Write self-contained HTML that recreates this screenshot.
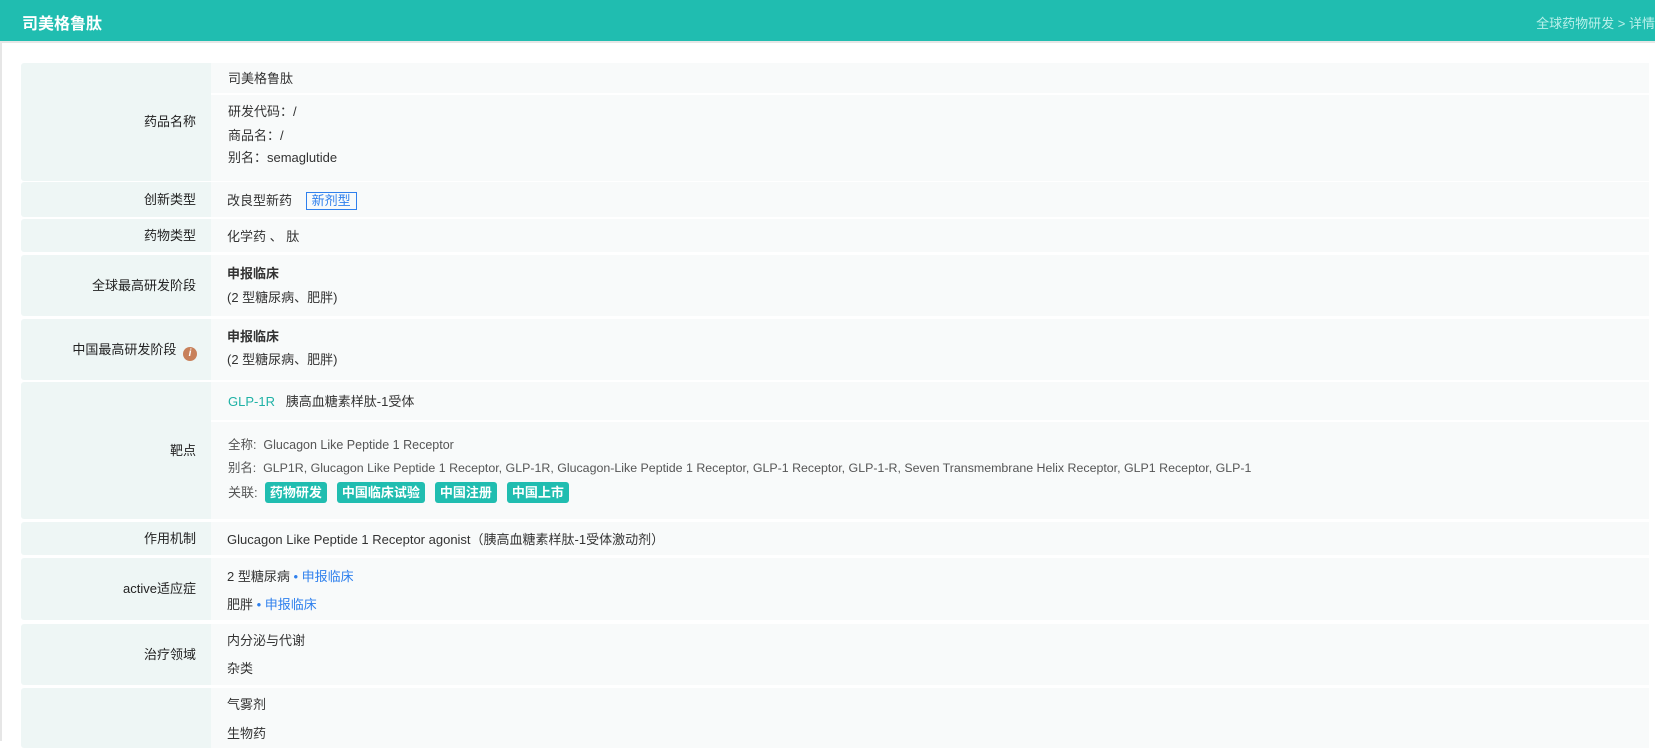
<!DOCTYPE html>
<html><head><meta charset="utf-8"><style>
*{margin:0;padding:0;box-sizing:border-box}
body{width:1655px;height:741px;overflow:hidden;background:#fff;font-family:"Liberation Sans","Noto Sans CJK SC",sans-serif;font-size:13px;color:#333;position:relative}
.hd{position:absolute;left:0;top:0;width:1655px;height:41px;background:#20bdb0}
.hd .t{position:absolute;left:22px;top:10px;color:#fff;font-size:16px;font-weight:bold}
.hd .r{position:absolute;right:0;top:13px;color:#b9f0ea;font-size:13px}
.bl{position:absolute;left:0;top:41px;width:2px;height:700px;background:#e6e6e6}
.bt{position:absolute;left:0;top:41px;width:1655px;height:2px;background:#e6e6e6}
.l{position:absolute;left:21px;width:190px;background:#eef6f5;border-radius:3px 0 0 3px;text-align:right;padding-right:15px;color:#222}
.c{position:absolute;left:211px;width:1438px;background:#f8fafa}
.tx{position:absolute;white-space:nowrap;line-height:16px}
.tag{display:inline-block;background:#20bdb0;color:#fff;font-weight:bold;border-radius:3px;padding:2px 5px;margin-right:10px;line-height:17px}
.b{color:#2f80ed}
</style></head><body>
<div class="hd"><div class="t">司美格鲁肽</div><div class="r">全球药物研发 &gt; 详情</div></div>
<div class="bt"></div><div class="bl"></div>

<div class="l" style="top:63px;height:118px;line-height:118px">药品名称</div>
<div class="c" style="top:63px;height:30px"></div>
<div class="c" style="top:95px;height:86px"></div>
<div class="tx" style="left:228px;top:71px">司美格鲁肽</div>
<div class="tx" style="left:228px;top:104px">研发代码：/</div>
<div class="tx" style="left:228px;top:128px">商品名：/</div>
<div class="tx" style="left:228px;top:150px">别名：semaglutide</div>

<div class="l" style="top:182px;height:35px;line-height:35px">创新类型</div>
<div class="c" style="top:182px;height:35px"></div>
<div class="tx" style="left:227px;top:192px">改良型新药 <span style="display:inline-block;margin-left:10px;border:1px solid #2f80ed;color:#2f80ed;padding:0 5px;line-height:16px">新剂型</span></div>

<div class="l" style="top:219px;height:33px;line-height:33px">药物类型</div>
<div class="c" style="top:219px;height:33px"></div>
<div class="tx" style="left:227px;top:229px">化学药 、 肽</div>

<div class="l" style="top:255px;height:61px;line-height:61px">全球最高研发阶段</div>
<div class="c" style="top:255px;height:61px"></div>
<div class="tx" style="left:227px;top:266px;font-weight:bold">申报临床</div>
<div class="tx" style="left:227px;top:290px">(2 型糖尿病、肥胖)</div>

<div class="l" style="top:319px;height:61px;line-height:61px;padding-right:14px">中国最高研发阶段 <span style="display:inline-block;width:14px;height:14px;border-radius:50%;background:#c8805a;color:#fff;font-size:10px;line-height:14px;text-align:center;font-style:italic;font-weight:bold;vertical-align:-2px;margin-left:3px">i</span></div>
<div class="c" style="top:319px;height:61px"></div>
<div class="tx" style="left:227px;top:329px;font-weight:bold">申报临床</div>
<div class="tx" style="left:227px;top:352px">(2 型糖尿病、肥胖)</div>

<div class="l" style="top:382px;height:137px;line-height:137px">靶点</div>
<div class="c" style="top:382px;height:38px"></div>
<div class="c" style="top:422px;height:97px"></div>
<div class="tx" style="left:228px;top:394px"><span style="color:#20b2a6">GLP-1R</span>&nbsp;&nbsp; 胰高血糖素样肽-1受体</div>
<div class="tx" style="left:228px;top:437px;color:#555;font-size:12.5px">全称:&nbsp; Glucagon Like Peptide 1 Receptor</div>
<div class="tx" style="left:228px;top:460px;color:#555;font-size:12.4px">别名:&nbsp; GLP1R, Glucagon Like Peptide 1 Receptor, GLP-1R, Glucagon-Like Peptide 1 Receptor, GLP-1 Receptor, GLP-1-R, Seven Transmembrane Helix Receptor, GLP1 Receptor, GLP-1</div>
<div class="tx" style="left:228px;top:482px;color:#555">关联:&nbsp; <span class="tag">药物研发</span><span class="tag">中国临床试验</span><span class="tag">中国注册</span><span class="tag">中国上市</span></div>

<div class="l" style="top:522px;height:33px;line-height:33px">作用机制</div>
<div class="c" style="top:522px;height:33px"></div>
<div class="tx" style="left:227px;top:532px">Glucagon Like Peptide 1 Receptor agonist（胰高血糖素样肽-1受体激动剂）</div>

<div class="l" style="top:558px;height:62px;line-height:62px">active适应症</div>
<div class="c" style="top:558px;height:62px"></div>
<div class="tx" style="left:227px;top:569px">2 型糖尿病<span class="b"> • 申报临床</span></div>
<div class="tx" style="left:227px;top:597px">肥胖<span class="b"> • 申报临床</span></div>

<div class="l" style="top:624px;height:61px;line-height:61px">治疗领域</div>
<div class="c" style="top:624px;height:61px"></div>
<div class="tx" style="left:227px;top:633px">内分泌与代谢</div>
<div class="tx" style="left:227px;top:661px">杂类</div>

<div class="l" style="top:688px;height:60px"></div>
<div class="c" style="top:688px;height:60px"></div>
<div class="tx" style="left:227px;top:697px">气雾剂</div>
<div class="tx" style="left:227px;top:726px">生物药</div>
</body></html>
